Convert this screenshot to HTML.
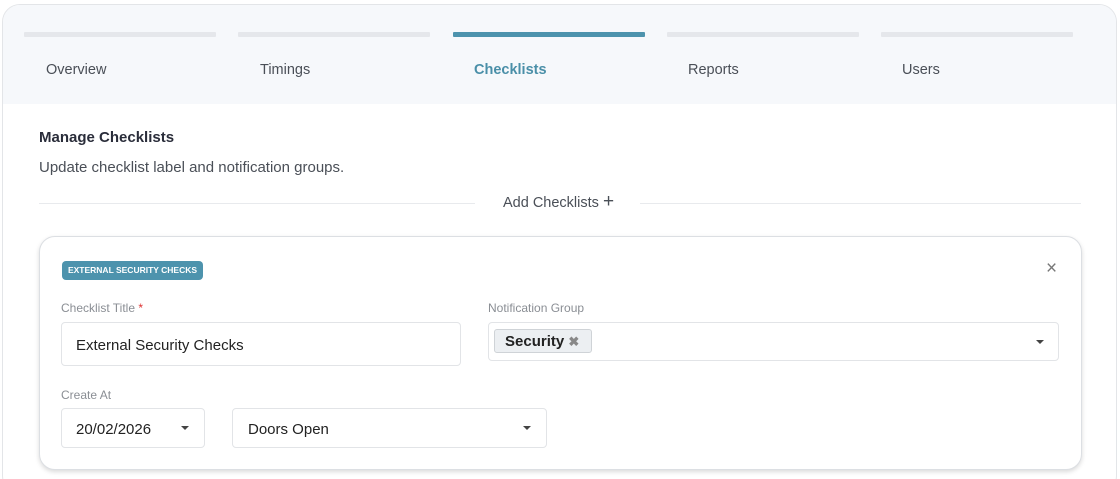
<!DOCTYPE html>
<html style="overflow:hidden;height:479px"><head><style>
*{box-sizing:border-box;margin:0;padding:0}
body{width:1120px;height:479px;background:#fff;font-family:"Liberation Sans",sans-serif;position:relative;overflow:hidden}
.a{position:absolute}
.outer{left:2px;top:4px;width:1115px;height:490px;border:1px solid #e3e5e8;border-radius:18px;background:#fff;overflow:hidden}
.head{left:0;top:0;width:100%;height:99px;background:#f6f8fb}
.bar{height:5px;top:27px;width:192px;background:#e5e7eb;border-radius:1px}
.tab{top:57px;font-size:14.5px;color:#4a4f57}
.in{border:1px solid #e2e4e7;border-radius:4px;background:#fff}
.lbl{font-size:12px;color:#8a8e94}
.caret{width:0;height:0;border-left:4px solid transparent;border-right:4px solid transparent;border-top:4px solid #444}
</style></head><body>
<div class="a outer">
 <div class="a head">
  <div class="a bar" style="left:21px"></div>
  <div class="a bar" style="left:235px"></div>
  <div class="a bar" style="left:450px;background:#4d93ad"></div>
  <div class="a bar" style="left:664px"></div>
  <div class="a bar" style="left:878px"></div>
  <div class="a tab" style="left:43px">Overview</div>
  <div class="a tab" style="left:257px">Timings</div>
  <div class="a tab" style="left:471px;color:#4a8fa8;font-weight:bold">Checklists</div>
  <div class="a tab" style="left:685px">Reports</div>
  <div class="a tab" style="left:899px">Users</div>
 </div>
</div>
<div class="a" style="left:39px;top:129px;font-size:15px;font-weight:bold;color:#2a2d3a">Manage Checklists</div>
<div class="a" style="left:39px;top:159px;font-size:15px;color:#4a4f57">Update checklist label and notification groups.</div>
<div class="a" style="left:39px;top:203px;width:436px;height:1px;background:#e8eaed"></div>
<div class="a" style="left:640px;top:203px;width:441px;height:1px;background:#e8eaed"></div>
<div class="a" style="left:503px;top:195px;font-size:14.5px;color:#4a4f57">Add Checklists <span style="font-size:19px;line-height:10px">+</span></div>
<div class="a" style="left:39px;top:236px;width:1043px;height:234px;border:1px solid #dcdfe3;border-radius:16px;box-shadow:0 2px 5px rgba(0,0,0,.15);background:#fff"></div>
<div class="a" style="left:62px;top:261px;width:141px;height:19px;background:#4d93ad;border-radius:4px;color:#fff;font-size:8.5px;font-weight:bold;line-height:19px;text-align:center">EXTERNAL SECURITY CHECKS</div>
<div class="a" style="left:1046px;top:258px;font-size:19px;color:#777">×</div>
<div class="a lbl" style="left:61px;top:301px">Checklist Title <span style="color:#d33">*</span></div>
<div class="a in" style="left:61px;top:322px;width:400px;height:44px"></div>
<div class="a" style="left:76px;top:337px;font-size:15px;color:#222">External Security Checks</div>
<div class="a lbl" style="left:488px;top:301px">Notification Group</div>
<div class="a in" style="left:488px;top:322px;width:571px;height:39px"></div>
<div class="a" style="left:494px;top:329px;width:98px;height:24px;background:#eceff2;border:1px solid #cfd3d7;border-radius:3px;font-size:15px;font-weight:bold;color:#222;line-height:23px;padding-left:10px">Security <span style="color:#888;font-size:13px">✖</span></div>
<div class="a caret" style="left:1036px;top:340px"></div>
<div class="a lbl" style="left:61px;top:388px">Create At</div>
<div class="a in" style="left:61px;top:408px;width:144px;height:40px"></div>
<div class="a" style="left:76px;top:421px;font-size:15px;color:#222">20/02/2026</div>
<div class="a caret" style="left:181px;top:426px"></div>
<div class="a in" style="left:232px;top:408px;width:315px;height:40px"></div>
<div class="a" style="left:248px;top:421px;font-size:15px;color:#222">Doors Open</div>
<div class="a caret" style="left:523px;top:426px"></div>
</body></html>
